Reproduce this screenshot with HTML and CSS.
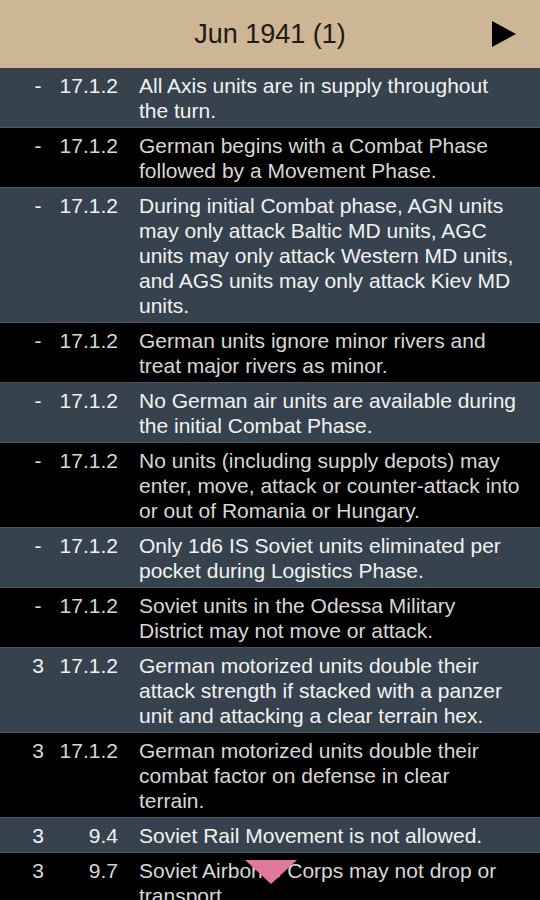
FILE: index.html
```html
<!DOCTYPE html>
<html>
<head>
<meta charset="utf-8">
<link rel="stylesheet" href="styles.css">
</head>
<body>
<div class="screen">
  <header class="bar">
    <div class="title">Jun 1941 (1)</div>
    <svg class="play" viewBox="0 0 24 26" width="24" height="26"><polygon points="0,0 24,13 0,26" fill="#000"/></svg>
  </header>
  <div class="list">
    <div class="row slate"><div class="c1">-</div><div class="c2">17.1.2</div><div class="c3">All Axis units are in supply throughout the turn.</div></div>
    <div class="row black"><div class="c1">-</div><div class="c2">17.1.2</div><div class="c3">German begins with a Combat Phase followed by a Movement Phase.</div></div>
    <div class="row slate"><div class="c1">-</div><div class="c2">17.1.2</div><div class="c3">During initial Combat phase, AGN units may only attack Baltic MD units, AGC units may only attack Western MD units, and AGS units may only attack Kiev MD units.</div></div>
    <div class="row black"><div class="c1">-</div><div class="c2">17.1.2</div><div class="c3">German units ignore minor rivers and treat major rivers as minor.</div></div>
    <div class="row slate"><div class="c1">-</div><div class="c2">17.1.2</div><div class="c3">No German air units are available during the initial Combat Phase.</div></div>
    <div class="row black"><div class="c1">-</div><div class="c2">17.1.2</div><div class="c3">No units (including supply depots) may enter, move, attack or counter-attack into or out of Romania or Hungary.</div></div>
    <div class="row slate"><div class="c1">-</div><div class="c2">17.1.2</div><div class="c3">Only 1d6 IS Soviet units eliminated per pocket during Logistics Phase.</div></div>
    <div class="row black"><div class="c1">-</div><div class="c2">17.1.2</div><div class="c3">Soviet units in the Odessa Military District may not move or attack.</div></div>
    <div class="row slate"><div class="c1">3</div><div class="c2">17.1.2</div><div class="c3">German motorized units double their attack strength if stacked with a panzer unit and attacking a clear terrain hex.</div></div>
    <div class="row black"><div class="c1">3</div><div class="c2">17.1.2</div><div class="c3">German motorized units double their combat factor on defense in clear terrain.</div></div>
    <div class="row slate"><div class="c1">3</div><div class="c2">9.4</div><div class="c3">Soviet Rail Movement is not allowed.</div></div>
    <div class="row black"><div class="c1">3</div><div class="c2">9.7</div><div class="c3">Soviet Airborne Corps may not drop or transport.</div></div>
  </div>
  <div class="marker"></div>
</div>
</body>
</html>
```

FILE: styles.css
```css
html, body {
  margin: 0;
  padding: 0;
  background: #000;
}
.screen {
  position: relative;
  width: 540px;
  height: 900px;
  overflow: hidden;
  font-family: "Liberation Sans", Arial, sans-serif;
  background: #000;
}
.bar {
  height: 68px;
  background: #cdb695;
  display: flex;
  align-items: center;
  justify-content: center;
  position: relative;
}
.title {
  font-size: 27px;
  color: #1e1a14;
}
.play {
  position: absolute;
  right: 24px;
  top: 21px;
}
.list {
  display: flex;
  flex-direction: column;
}
.row {
  display: grid;
  grid-template-columns: 38px 61px 1fr;
  padding: 5px 20px 4px 19px;
  border-bottom: 1px solid #4b5660;
  font-size: 21px;
  line-height: 25px;
}
.slate {
  background: #36434e;
  color: #f2f2f2;
}
.black {
  background: #000;
  color: #d6d6d6;
}
.c1 {
  text-align: center;
}
.c2 {
  text-align: right;
}
.c3 {
  padding-left: 21px;
}
.marker {
  position: absolute;
  left: 245px;
  top: 860px;
  width: 0;
  height: 0;
  border-left: 26px solid transparent;
  border-right: 26px solid transparent;
  border-top: 24px solid #e07a9c;
}
```
